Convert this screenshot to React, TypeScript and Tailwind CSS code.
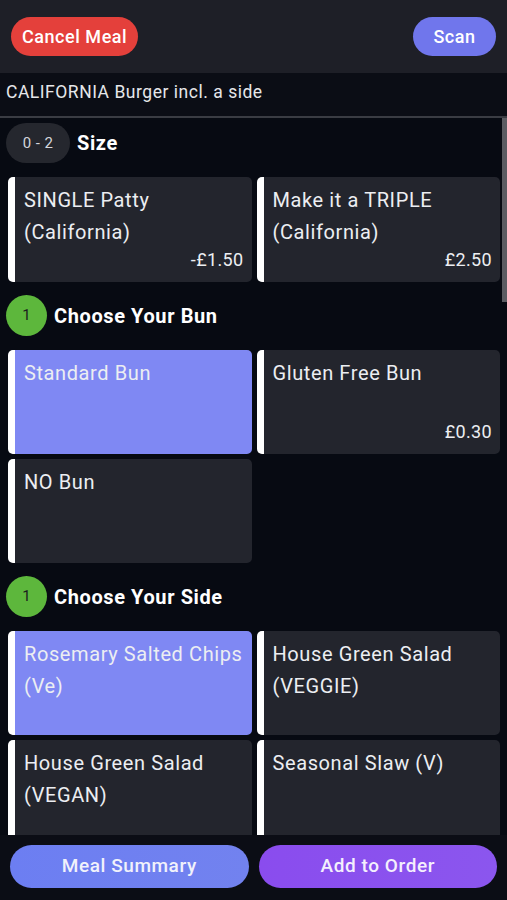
import React from "react"

type Option = {
  name: string
  price?: string
  selected?: boolean
}

type Section = {
  badge: string
  title: string
  pill?: boolean
  options: Option[]
}

const sections: Section[] = [
  {
    badge: "0 - 2",
    title: "Size",
    pill: true,
    options: [
      { name: "SINGLE Patty (California)", price: "-£1.50" },
      { name: "Make it a TRIPLE (California)", price: "£2.50" },
    ],
  },
  {
    badge: "1",
    title: "Choose Your Bun",
    options: [
      { name: "Standard Bun", selected: true },
      { name: "Gluten Free Bun", price: "£0.30" },
      { name: "NO Bun" },
    ],
  },
  {
    badge: "1",
    title: "Choose Your Side",
    options: [
      { name: "Rosemary Salted Chips (Ve)", selected: true },
      { name: "House Green Salad (VEGGIE)" },
      { name: "House Green Salad (VEGAN)" },
      { name: "Seasonal Slaw (V)" },
    ],
  },
]

function OptionCard({ option }: { option: Option }) {
  return (
    <div
      className={`flex min-h-[104px] flex-col justify-between rounded-[5px] border-l-[7px] border-white pb-[10px] pl-[9px] pr-2 pt-[7px] ${
        option.selected ? "bg-[#7f88f3]" : "bg-[#23252d]"
      }`}
    >
      <p className="text-[20px] leading-[32px] tracking-[0.03em] text-[#eceef2]">{option.name}</p>
      {option.price ? (
        <p className="text-right text-[18px] leading-[24px] tracking-[0.02em] text-[#eceef2]">
          {option.price}
        </p>
      ) : null}
    </div>
  )
}

function SectionBlock({ section }: { section: Section }) {
  return (
    <div className="flex flex-col gap-[14px]">
      <div className="flex items-center gap-[7px] pl-[6px]">
        {section.pill ? (
          <span className="flex h-10 w-16 items-center justify-center rounded-full bg-[#25272e] text-[15px] tracking-[0.03em] text-[#d4d6dc]">
            {section.badge}
          </span>
        ) : (
          <span className="flex h-[41px] w-[41px] items-center justify-center rounded-full bg-[#5db73c] text-[15px] text-[#1b1d1f]">
            {section.badge}
          </span>
        )}
        <span className="text-[20px] font-bold tracking-[0.03em] text-white">{section.title}</span>
      </div>
      <div className="grid grid-cols-2 gap-[5px] pl-2 pr-[7px]">
        {section.options.map((option) => (
          <OptionCard key={option.name} option={option} />
        ))}
      </div>
    </div>
  )
}

export default function App() {
  return (
    <div
      className="flex h-[900px] w-[507px] flex-col overflow-hidden bg-[#070a12]"
      style={{ fontFamily: "Roboto, 'Noto Sans', sans-serif" }}
    >
      <header className="flex h-[73px] shrink-0 items-center justify-between bg-[#1e1f27] px-[11px]">
        <button className="h-[39px] rounded-full bg-[#e4403b] px-[11px] text-[18px] font-medium tracking-[0.03em] text-white">
          Cancel Meal
        </button>
        <button className="h-[39px] w-[83px] rounded-full bg-[#7076ec] text-[18px] font-medium tracking-[0.03em] text-white">
          Scan
        </button>
      </header>

      <div className="flex h-[45px] shrink-0 items-center border-b-2 border-[#3a3c43] bg-[#0b0d15] px-[6px] pb-[4px]">
        <p className="text-[17.5px] tracking-[0.03em] text-[#e6e7ea]">CALIFORNIA Burger incl. a side</p>
      </div>

      <div className="relative flex-1 overflow-hidden">
        <div className="flex flex-col gap-[13px] pt-[5px]">
          {sections.map((section) => (
            <SectionBlock key={section.title} section={section} />
          ))}
        </div>
        <div className="absolute right-0 top-0 h-[184px] w-[5px] bg-[#5b5c62]" />
      </div>

      <footer className="flex h-[65px] shrink-0 items-center gap-[10px] bg-[#0b0d15] px-[10px] pb-[2px]">
        <button className="h-[43px] flex-1 rounded-full bg-gradient-to-r from-[#6c7ef2] to-[#7282ef] text-[19px] font-medium tracking-[0.03em] text-[#f1f2fb]">
          Meal Summary
        </button>
        <button className="h-[43px] flex-1 rounded-full bg-gradient-to-r from-[#8a4cee] to-[#8b56ee] text-[19px] font-medium tracking-[0.03em] text-[#f4effd]">
          Add to Order
        </button>
      </footer>
    </div>
  )
}
